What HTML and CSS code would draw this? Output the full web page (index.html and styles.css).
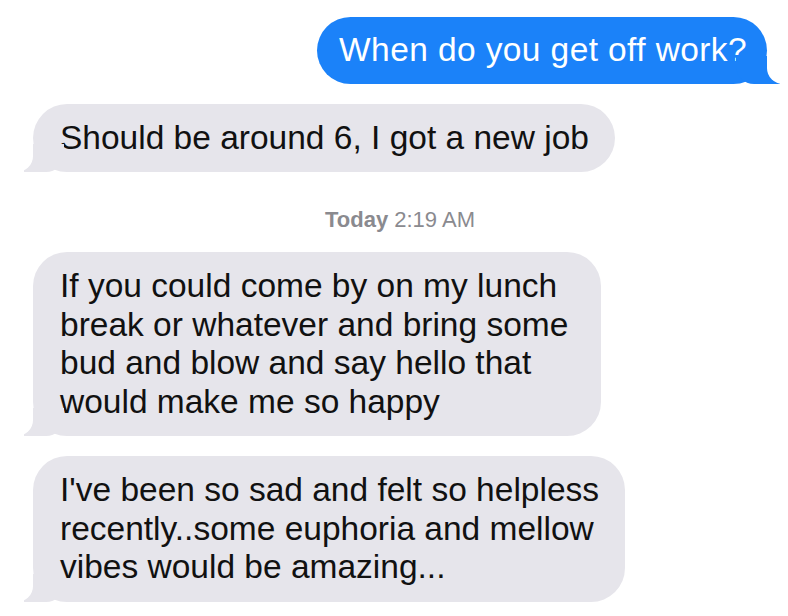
FILE: index.html
```html
<!DOCTYPE html>
<html lang="en">
  <head>
    <meta charset="UTF-8" />
    <meta name="viewport" content="width=device-width, initial-scale=1.0" />
    <title>Messages</title>
    <link rel="stylesheet" href="styles.css">
  </head>
  <body>
    <main class="thread">
      <div class="bubble sent">When do you get off work?</div>
      <div class="bubble received">Should be around 6, I got a new job</div>

      <div class="timestamp"><b>Today</b> 2:19 AM</div>

      <div class="bubble received wide">
        If you could come by on my lunch<br />
        break or whatever and bring some<br />
        bud and blow and say hello that<br />
        would make me so happy
      </div>
      <div class="bubble received">
        I've been so sad and felt so helpless<br />
        recently..some euphoria and mellow<br />
        vibes would be amazing...
      </div>
    </main>
  </body>
</html>
```

FILE: styles.css
```css
html {
  height: 100%;
}

body {
  margin: 0;
  background-color: white;
  font-family: "Liberation Sans", Arial, Helvetica, sans-serif;
}

.thread {
  display: flex;
  flex-direction: column;
  padding: 17px 21px 0 33px;
}

.bubble {
  position: relative;
  padding: 15px 26px 15px 27px;
  border-radius: 34px;
  font-size: 33.5px;
  line-height: 38.5px;
  white-space: nowrap;
}

.sent {
  align-self: flex-end;
  padding-top: 14px;
  padding-bottom: 14px;
  padding-left: 22px;
  padding-right: 20px;
  background-color: #1b82f9;
  color: white;
  letter-spacing: 0.4px;
}

.received {
  align-self: flex-start;
  margin-top: 20px;
  background-color: #e6e5eb;
  color: #111;
}

.wide {
  padding-right: 33px;
}

/* tails */
.bubble::before,
.bubble::after {
  content: "";
  position: absolute;
  bottom: 0;
  height: 28px;
}

.received::before {
  left: -9px;
  width: 40px;
  background-color: #e6e5eb;
  border-bottom-right-radius: 18px;
}

.received::after {
  left: -22px;
  width: 22px;
  background-color: white;
  border-bottom-right-radius: 16px;
}

.sent::before {
  right: -13px;
  width: 44px;
  background-color: #1b82f9;
  border-bottom-left-radius: 18px;
}

.sent::after {
  right: -26px;
  width: 26px;
  background-color: white;
  border-bottom-left-radius: 16px;
}

.timestamp {
  align-self: center;
  margin: 35px 0 0 0;
  font-size: 22px;
  line-height: 26px;
  color: #8a8a8f;
}

.timestamp b {
  font-weight: bold;
}

.timestamp + .bubble {
  margin-top: 19px;
}
```
